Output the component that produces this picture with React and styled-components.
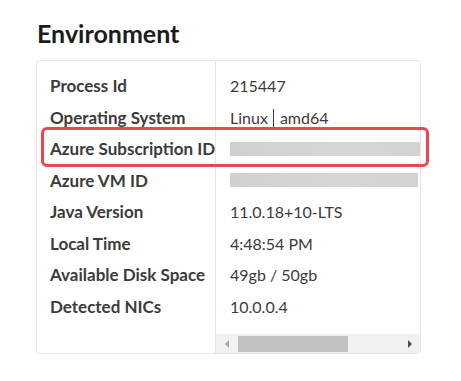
import React from 'react';
import styled, { createGlobalStyle } from 'styled-components';

const GlobalStyle = createGlobalStyle`
  body {
    margin: 0;
    background: #ffffff;
    font-family: Lato, "Open Sans", sans-serif;
    color: #333333;
  }
`;

// Page wrapper
const Page = styled.div`
  padding: 19px 40px 0 36px;
  width: 461px;
  box-sizing: border-box;
`;

const Title = styled.h2`
  margin: 0 0 13px 1px;
  font-size: 25px;
  line-height: 28px;
  font-weight: 700;
  color: #1c1c1c;
`;

// Card holding the two column table
const Card = styled.div`
  position: relative;
  display: grid;
  grid-template-columns: 179px 1fr;
  border: 1px solid #e2e7ee;
  border-radius: 4px;
  width: 385px;
  box-sizing: border-box;
`;

const LabelColumn = styled.div`
  display: flex;
  flex-direction: column;
  padding: 9px 0 31px 13px;
  border-right: 1px solid #e2e7ee;
`;

const ValueColumn = styled.div`
  display: flex;
  flex-direction: column;
  min-width: 0;
  padding-top: 9px;
`;

const Label = styled.div`
  height: 31.5px;
  display: flex;
  align-items: center;
  font-size: 17px;
  font-weight: 700;
  color: #3b3b3b;
  white-space: nowrap;
`;

const Value = styled.div`
  height: 31.5px;
  display: flex;
  align-items: center;
  padding-left: 14px;
  font-size: 16px;
  color: #3b3b3b;
  white-space: nowrap;
  overflow: hidden;
`;

const Pipe = styled.span`
  display: inline-block;
  width: 1px;
  height: 20px;
  margin: 3px 6px 0 5px;
  background: #3b3b3b;
`;

// Redacted value placeholder
const Redacted = styled.div`
  width: ${({ $w }) => $w}px;
  height: 14px;
  flex-shrink: 0;
  background: linear-gradient(90deg, #d0d0d0 0%, #d6d6d6 60%, #d2d2d2 100%);
`;

const Dot = styled.span`
  width: 1px;
  height: 1px;
  flex-shrink: 0;
  margin-left: 2px;
  margin-top: 8px;
  background: #555;
`;

// Fake horizontal scrollbar
const Scrollbar = styled.div`
  margin-top: auto;
  height: 19px;
  display: flex;
  align-items: center;
  background: #f1f1f1;
  border-bottom-right-radius: 3px;
`;

const Arrow = styled.div`
  width: 0;
  height: 0;
  border-top: 4px solid transparent;
  border-bottom: 4px solid transparent;
  ${({ $dir }) =>
    $dir === 'left'
      ? 'border-right: 4px solid #a3a3a3; margin: 0 0 0 9px;'
      : 'border-left: 4px solid #505050; margin: 0 8px 0 auto;'}
`;

const Thumb = styled.div`
  width: 110px;
  height: 16px;
  margin-left: 9px;
  background: #c1c1c1;
`;

// Red highlight drawn over the table
const Highlight = styled.div`
  position: absolute;
  left: 4px;
  top: 66px;
  width: 388px;
  height: 40px;
  box-sizing: border-box;
  border: 3px solid #e8484f;
  border-radius: 6px;
  pointer-events: none;
`;

const rows = [
  { label: 'Process Id', value: '215447' },
  { label: 'Operating System', value: 'os' },
  { label: 'Azure Subscription ID', value: 'redacted' },
  { label: 'Azure VM ID', value: 'redacted-dot' },
  { label: 'Java Version', value: '11.0.18+10-LTS' },
  { label: 'Local Time', value: '4:48:54 PM' },
  { label: 'Available Disk Space', value: '49gb / 50gb' },
  { label: 'Detected NICs', value: '10.0.0.4' },
];

const renderValue = (value) => {
  if (value === 'os') {
    return (
      <>
        Linux<Pipe />amd64
      </>
    );
  }
  if (value === 'redacted') return <Redacted $w={200} />;
  if (value === 'redacted-dot') {
    return (
      <>
        <Redacted $w={188} />
        <Dot />
      </>
    );
  }
  return value;
};

const App = () => {
  return (
    <>
      <GlobalStyle />
      <Page>
        <Title>Environment</Title>
        <Card>
          <LabelColumn>
            {rows.map((r) => (
              <Label key={r.label}>{r.label}</Label>
            ))}
          </LabelColumn>
          <ValueColumn>
            {rows.map((r) => (
              <Value key={r.label}>{renderValue(r.value)}</Value>
            ))}
            <Scrollbar>
              <Arrow $dir="left" />
              <Thumb />
              <Arrow $dir="right" />
            </Scrollbar>
          </ValueColumn>
          <Highlight />
        </Card>
      </Page>
    </>
  );
};

export default App;
